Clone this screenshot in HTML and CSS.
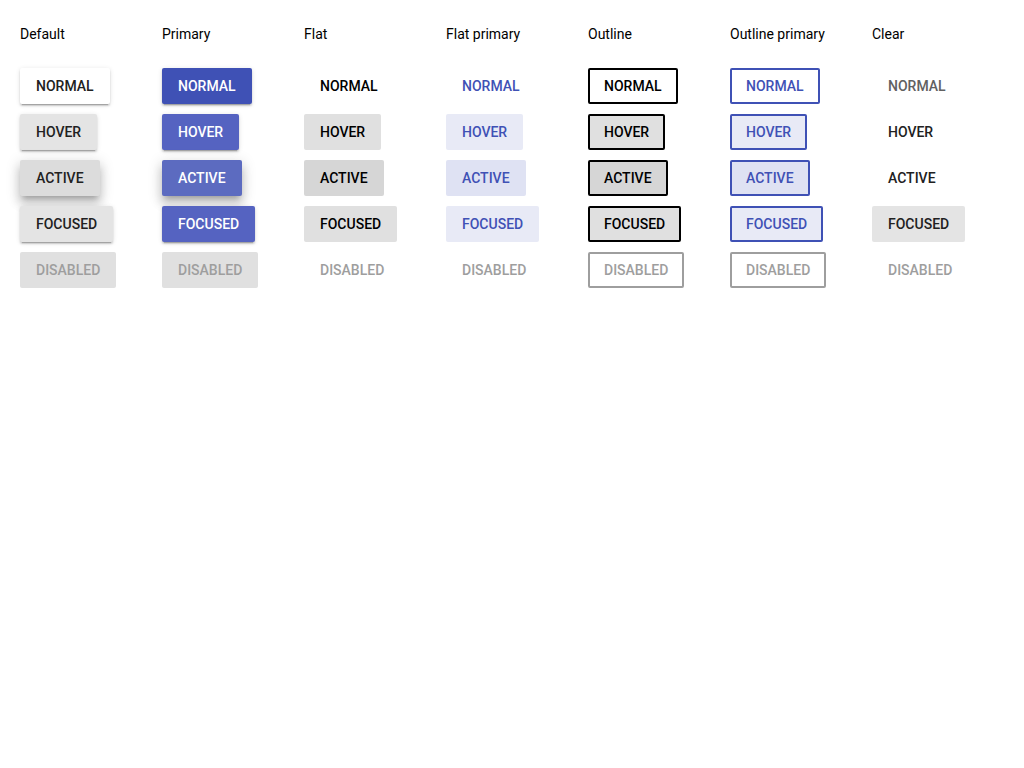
FILE: index.html
```html
<!DOCTYPE html>
<html>
<head>
<meta charset="utf-8">
<link rel="stylesheet" href="styles.css">
</head>
<body>
<div class="grid">
  <div class="col">
    <div class="title">Default</div>
    <button class="btn def">Normal</button>
    <button class="btn def hover">Hover</button>
    <button class="btn def active">Active</button>
    <button class="btn def focused">Focused</button>
    <button class="btn def disabled">Disabled</button>
  </div>
  <div class="col">
    <div class="title">Primary</div>
    <button class="btn pri">Normal</button>
    <button class="btn pri hover">Hover</button>
    <button class="btn pri active">Active</button>
    <button class="btn pri focused">Focused</button>
    <button class="btn pri disabled">Disabled</button>
  </div>
  <div class="col">
    <div class="title">Flat</div>
    <button class="btn flat">Normal</button>
    <button class="btn flat hover">Hover</button>
    <button class="btn flat active">Active</button>
    <button class="btn flat focused">Focused</button>
    <button class="btn flat disabled">Disabled</button>
  </div>
  <div class="col">
    <div class="title">Flat primary</div>
    <button class="btn flatp">Normal</button>
    <button class="btn flatp hover">Hover</button>
    <button class="btn flatp active">Active</button>
    <button class="btn flatp focused">Focused</button>
    <button class="btn flatp disabled">Disabled</button>
  </div>
  <div class="col">
    <div class="title">Outline</div>
    <button class="btn out">Normal</button>
    <button class="btn out hover">Hover</button>
    <button class="btn out active">Active</button>
    <button class="btn out focused">Focused</button>
    <button class="btn out disabled">Disabled</button>
  </div>
  <div class="col">
    <div class="title">Outline primary</div>
    <button class="btn outp">Normal</button>
    <button class="btn outp hover">Hover</button>
    <button class="btn outp active">Active</button>
    <button class="btn outp focused">Focused</button>
    <button class="btn outp disabled">Disabled</button>
  </div>
  <div class="col">
    <div class="title">Clear</div>
    <button class="btn clear">Normal</button>
    <button class="btn clear hover">Hover</button>
    <button class="btn clear active">Active</button>
    <button class="btn clear focused">Focused</button>
    <button class="btn clear disabled">Disabled</button>
  </div>
</div>
</body>
</html>
```
FILE: styles.css
```css
html, body {
  margin: 0;
  padding: 0;
  background: #fff;
}
body {
  font-family: Roboto, "Liberation Sans", sans-serif;
  color: #000;
}
.grid {
  display: flex;
  padding: 24px 20px;
}
.col {
  flex: 0 0 142px;
  width: 142px;
  display: flex;
  flex-direction: column;
  align-items: flex-start;
  gap: 10px;
}
.title {
  font-size: 14px;
  line-height: 20px;
  margin-bottom: 14px;
  color: #000;
  white-space: nowrap;
}
.btn {
  font-family: Roboto, "Liberation Sans", sans-serif;
  font-size: 14px;
  font-weight: 500;
  text-transform: uppercase;
  height: 36px;
  padding: 0 16px;
  border: none;
  border-radius: 2px;
  background: transparent;
  color: #212121;
  line-height: 36px;
  margin: 0;
  white-space: nowrap;
}
/* Default */
.def { background: #fff; box-shadow: 0 2px 2px rgba(0,0,0,.14), 0 1px 5px rgba(0,0,0,.12), 0 3px 1px -2px rgba(0,0,0,.2); }
.def.hover { background: #e4e4e4; }
.def.active { background: #dcdcdc; box-shadow: 0 8px 10px 1px rgba(0,0,0,.14), 0 3px 14px 2px rgba(0,0,0,.12), 0 5px 5px -3px rgba(0,0,0,.2); }
.def.focused { background: #e4e4e4; }
.def.disabled { background: #e0e0e0; color: #9e9e9e; box-shadow: none; }
/* Primary */
.pri { background: #3f51b5; color: #fff; box-shadow: 0 2px 2px rgba(0,0,0,.14), 0 1px 5px rgba(0,0,0,.12), 0 3px 1px -2px rgba(0,0,0,.2); }
.pri.hover { background: #5563c1; }
.pri.active { background: #5c6bc0; box-shadow: 0 8px 10px 1px rgba(0,0,0,.14), 0 3px 14px 2px rgba(0,0,0,.12), 0 5px 5px -3px rgba(0,0,0,.2); }
.pri.focused { background: #5563c1; }
.pri.disabled { background: #e0e0e0; color: #9e9e9e; box-shadow: none; }
/* Flat */
.flat { color: #000; }
.flat.hover { background: #e0e0e0; }
.flat.active { background: #d6d6d6; }
.flat.focused { background: #e0e0e0; }
.flat.disabled { color: #9e9e9e; }
/* Flat primary */
.flatp { color: #3f51b5; }
.flatp.hover { background: #e8eaf6; }
.flatp.active { background: #dfe2f3; }
.flatp.focused { background: #e8eaf6; }
.flatp.disabled { color: #9e9e9e; }
/* Outline */
.out { border: 2px solid #000; color: #000; line-height: 32px; padding: 0 14px; }
.out.hover { background: #e0e0e0; }
.out.active { background: #d6d6d6; }
.out.focused { background: #e0e0e0; }
.out.disabled { border-color: #9e9e9e; color: #9e9e9e; background: transparent; }
/* Outline primary */
.outp { border: 2px solid #3f51b5; color: #3f51b5; line-height: 32px; padding: 0 14px; }
.outp.hover { background: #e8eaf6; }
.outp.active { background: #dfe2f3; }
.outp.focused { background: #e8eaf6; }
.outp.disabled { border-color: #9e9e9e; color: #9e9e9e; background: transparent; }
/* Clear */
.clear { color: #616161; }
.clear.hover { color: #212121; }
.clear.active { color: #212121; }
.clear.focused { background: #e4e4e4; color: #212121; }
.clear.disabled { color: #9e9e9e; }
```
